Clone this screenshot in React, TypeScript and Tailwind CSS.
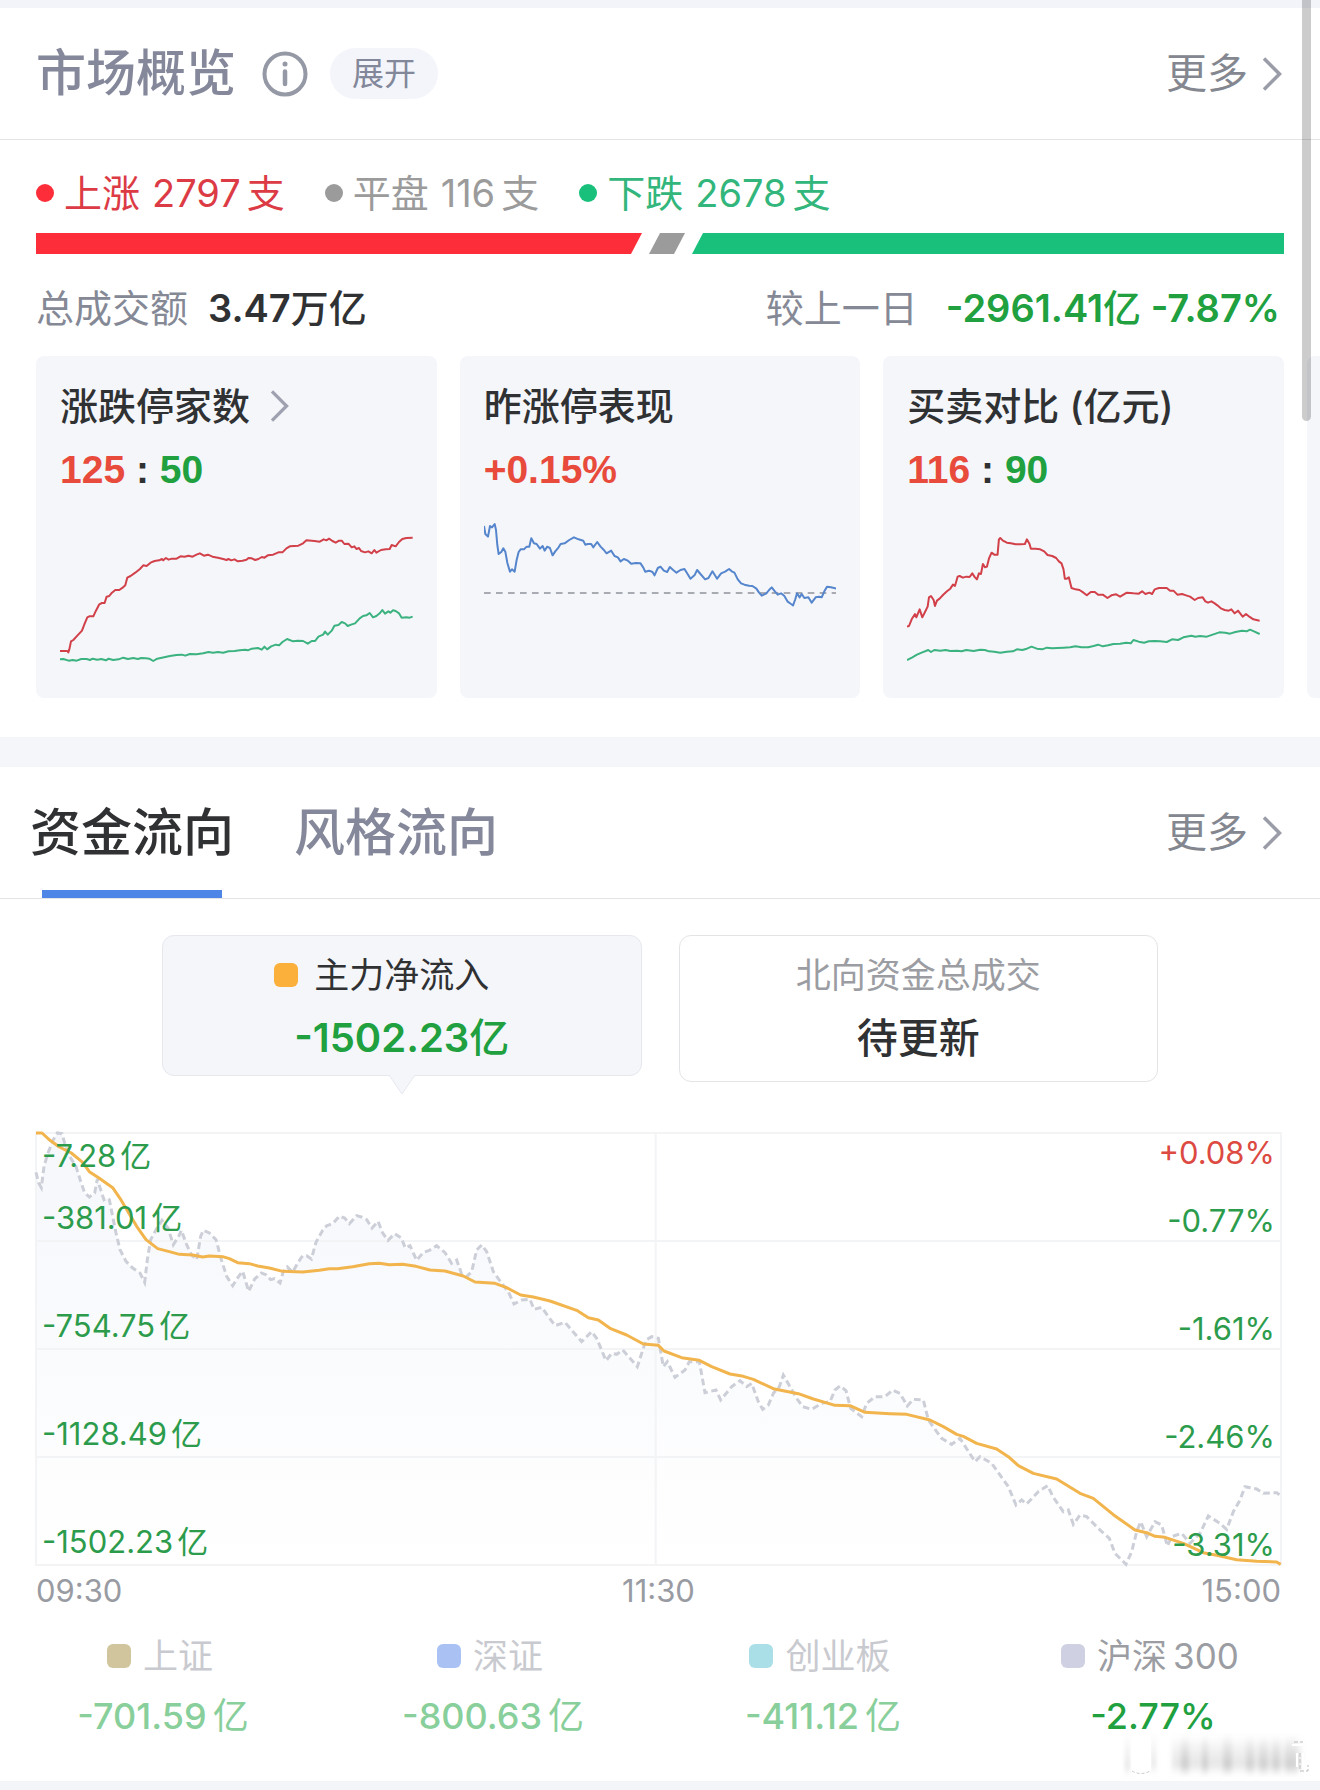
import clsx from 'clsx'
import React, { useState } from 'react'

const upDownRed =
    '0,393 22,393 25,397 28,388 33,364 40,360 52,347 66,332 74,311 82,292 88,289 100,289 108,272 118,253 126,249 134,249 140,230 148,228 156,218 166,210 178,210 188,203 196,196 202,173 212,168 226,158 240,147 250,136 260,138 272,128 284,123 298,121 306,117 310,121 318,114 326,119 336,116 350,116 362,109 374,110 386,107 398,110 410,104 420,100 432,107 444,104 458,110 474,113 490,117 500,120 506,117 514,121 524,118 534,124 548,122 560,119 566,114 576,115 586,120 596,117 606,111 614,113 624,106 640,104 656,97 668,97 680,85 690,79 716,77 730,70 740,61 764,63 780,65 792,58 800,61 808,56 818,63 828,68 838,62 846,62 854,72 866,71 876,82 884,79 890,87 898,84 904,93 916,97 926,94 936,100 944,90 950,98 964,90 978,88 990,87 996,75 1008,79 1018,66 1028,57 1040,54 1059,53'
const upDownGreen =
    '0,418 10,417 26,422 38,420 50,422 64,417 80,417 90,420 98,416 112,419 124,417 138,421 146,416 160,420 176,418 190,413 204,417 220,414 234,417 244,414 258,415 268,416 280,423 292,416 306,413 330,408 350,405 366,404 376,407 390,402 410,403 430,400 446,396 460,398 474,396 490,398 506,394 524,393 540,391 556,389 564,391 576,386 594,384 606,389 614,380 622,388 634,379 648,374 658,376 668,366 682,357 700,364 714,362 730,363 744,371 756,363 766,363 776,350 790,344 796,335 804,344 816,332 824,317 836,315 846,306 856,310 864,318 874,314 886,310 900,295 910,288 920,286 930,279 940,292 950,288 960,280 968,270 976,281 986,274 992,278 1000,271 1008,273 1018,280 1026,293 1040,292 1050,293 1059,290'
const yesterdayBlue =
    '0,18 4,42 12,50 18,18 24,22 32,12 36,30 40,75 44,102 52,96 58,85 64,95 70,128 78,155 84,148 92,155 98,120 104,96 110,88 120,88 128,80 136,80 142,55 150,70 158,72 168,86 176,78 182,92 190,80 198,84 206,106 214,94 224,82 230,72 242,70 256,60 270,52 284,58 298,62 304,74 312,72 322,72 328,82 340,66 350,80 360,90 368,100 382,92 392,108 402,112 410,124 420,117 432,122 442,131 456,129 470,130 478,142 484,155 496,152 506,156 512,166 522,144 530,140 540,152 550,156 558,141 568,150 578,158 590,150 602,147 610,160 620,176 632,166 640,150 650,162 664,178 674,174 686,154 700,176 712,160 724,155 736,147 744,154 752,158 762,178 772,190 782,194 796,197 806,198 818,206 826,218 834,227 848,220 856,210 864,202 874,215 882,224 892,220 902,228 912,245 922,252 928,256 934,240 940,220 948,232 954,222 962,234 974,232 984,248 996,232 1006,230 1014,232 1022,214 1030,200 1042,202 1059,206'
const buyRed =
    '0,320 6,318 14,298 24,282 28,292 38,268 46,292 54,276 62,260 66,232 72,228 80,240 84,258 90,242 98,236 108,225 120,214 130,206 138,194 144,198 152,170 158,168 168,173 178,170 188,171 196,160 204,172 210,178 216,160 222,162 228,132 234,142 240,140 246,116 254,98 262,104 272,104 276,58 280,54 288,62 300,68 312,70 326,73 340,73 354,72 360,58 368,72 372,86 386,86 400,88 412,94 422,105 436,108 448,114 456,124 464,130 470,148 474,176 480,176 486,172 494,204 506,208 518,210 530,218 540,226 552,216 564,216 574,224 588,224 602,234 614,226 628,223 640,230 650,224 660,218 680,220 696,221 706,214 716,222 728,218 736,222 744,208 756,204 780,204 790,212 800,212 812,224 826,222 838,226 850,230 864,240 874,234 888,232 896,244 904,248 914,244 924,250 932,256 944,266 954,270 966,272 974,268 984,280 994,272 1008,290 1018,282 1028,290 1040,298 1059,302'
const sellGreen =
    '0,420 16,412 30,404 44,398 64,390 72,396 82,390 100,392 116,390 130,393 150,392 164,394 178,390 200,393 220,389 234,390 246,394 262,395 280,398 300,395 318,394 330,388 346,390 360,386 374,380 390,386 406,388 420,383 436,385 452,384 470,383 490,382 506,379 524,382 544,382 560,378 574,374 588,379 604,376 620,372 640,371 658,368 672,370 680,360 696,365 712,368 726,364 744,363 760,364 780,366 796,358 814,360 830,352 854,347 866,350 880,348 900,350 918,344 938,337 956,338 970,341 986,336 1006,332 1020,334 1030,329 1042,334 1059,342'
const mainFlow =
    '0,0 18,0 42,22 70,42 106,60 140,88 160,116 190,136 230,164 252,196 276,236 302,280 330,320 365,347 400,356 430,364 470,366 500,372 520,369 560,371 580,377 605,389 640,392 665,399 700,405 740,415 800,417 850,412 880,407 905,407 950,401 1000,392 1030,391 1060,395 1100,394 1140,400 1182,411 1227,414 1282,429 1317,447 1377,451 1412,464 1454,486 1492,492 1542,504 1622,532 1657,554 1687,561 1724,587 1772,606 1822,633 1867,637 1884,654 1937,674 1990,682 2027,701 2082,723 2122,730 2152,739 2212,767 2287,782 2332,798 2397,817 2442,818 2487,838 2562,842 2612,844 2682,861 2722,881 2762,904 2782,910 2822,931 2882,948 2917,971 2947,998 2992,1021 3062,1038 3132,1081 3172,1096 3232,1145 3297,1191 3332,1199 3357,1210 3387,1213 3442,1231 3502,1259 3542,1267 3602,1280 3662,1285 3722,1287 3734,1294'
const csi300 =
    '0,118 8,150 16,164 24,100 36,60 52,20 64,0 78,2 90,45 104,75 120,100 134,145 146,180 160,192 176,180 184,138 194,170 204,200 212,195 220,200 232,260 240,300 252,350 270,385 290,405 312,420 326,448 334,380 344,320 360,290 378,262 396,285 412,335 428,310 436,292 452,335 466,365 482,380 494,310 502,292 520,300 540,320 556,380 572,430 590,458 608,430 620,415 638,475 656,438 676,420 690,425 704,440 716,437 732,450 742,415 754,402 770,418 786,388 800,368 812,368 826,378 840,328 860,292 872,278 890,272 910,250 926,255 940,272 962,248 976,252 992,260 1008,285 1026,265 1040,300 1056,322 1076,302 1096,315 1108,345 1122,338 1142,382 1162,358 1180,352 1202,338 1227,359 1247,391 1262,381 1277,423 1292,431 1307,416 1322,351 1337,336 1352,356 1372,416 1397,451 1417,476 1434,513 1457,501 1482,499 1494,529 1517,523 1557,578 1587,568 1637,626 1667,596 1682,616 1710,683 1727,661 1742,664 1760,651 1804,701 1830,621 1847,611 1867,616 1882,701 1894,686 1917,733 1947,711 1960,686 1990,686 2007,779 2040,771 2054,801 2087,761 2112,743 2132,761 2147,751 2167,806 2180,829 2197,816 2212,781 2230,761 2242,726 2262,761 2282,796 2300,821 2327,829 2357,811 2382,806 2397,771 2412,759 2430,773 2444,826 2477,851 2492,811 2517,791 2547,791 2570,771 2592,781 2614,819 2632,799 2662,801 2677,861 2702,896 2717,916 2747,934 2772,916 2817,986 2832,971 2867,991 2917,1061 2940,1116 2957,1101 2972,1113 3007,1076 3035,1058 3052,1093 3082,1136 3097,1131 3112,1174 3132,1146 3152,1151 3192,1191 3220,1216 3237,1261 3270,1294 3287,1256 3302,1196 3314,1166 3332,1211 3357,1166 3377,1176 3394,1239 3407,1211 3437,1201 3462,1231 3492,1201 3517,1149 3552,1171 3572,1189 3592,1136 3612,1101 3627,1061 3662,1068 3682,1081 3722,1079 3735,1089'

const RED = '#d2404a'
const GREEN = '#3bb27f'
const BLUE = '#5585cc'

const leftLabels = ['-381.01', '-754.75', '-1128.49', '-1502.23']
const rightLabels = ['-0.77%', '-1.61%', '-2.46%', '-3.31%']

const legends = [
    { name: '上证', value: '-701.59', unit: '亿', swatch: 'bg-[#d0c59c]', active: false },
    { name: '深证', value: '-800.63', unit: '亿', swatch: 'bg-[#a9c1f3]', active: false },
    { name: '创业板', value: '-411.12', unit: '亿', swatch: 'bg-[#aadfe8]', active: false },
    { name: '沪深', suffix: '300', value: '-2.77%', swatch: 'bg-[#cfd0e1]', active: true },
]

// card figures keep one width per digit
const figure = "font-['Liberation_Sans','Noto_Sans_CJK_SC',sans-serif] text-[39px] font-bold"

const Chevron = ({ className }: { className?: string }) => (
    <svg viewBox="0 0 20 34" fill="none" stroke="currentColor" strokeWidth={3.5} className={className}>
        <path d="M2 1.5 17.5 17 2 32.5" />
    </svg>
)

const More = () => (
    <a href="#more" className="flex items-center gap-3.5 text-[41px] leading-[75px] text-[#84878f]">
        更多
        <Chevron className="h-[34px] w-5 text-[#9a9ca8]" />
    </a>
)

const Count = ({ label, count, dot, text }: { label: string; count: number; dot: string; text: string }) => (
    <div className={clsx('flex items-center', text)}>
        <span className={clsx('mr-2.5 size-[18px] rounded-full', dot)}></span>
        <span>{label}</span>
        <span className="mr-1.5 ml-3">{count}</span>
        <span>支</span>
    </div>
)

const Spark = ({ lines, dashed }: { lines: { points: string; color: string }[]; dashed?: boolean }) => (
    <svg viewBox="0 0 1059 450" preserveAspectRatio="none" className="mt-[26px] block h-[150px] w-full" fill="none">
        {dashed && <path d="M0 219H1059" stroke="#8f939b" strokeWidth={5} strokeDasharray="20 16" />}
        {lines.map((line) => (
            <polyline
                key={line.color}
                points={line.points}
                stroke={line.color}
                strokeWidth={6}
                strokeLinejoin="round"
            />
        ))}
    </svg>
)

const Card = ({ children }: { children?: React.ReactNode }) => (
    <div className="w-[calc((100%-46px)/3)] flex-none rounded-lg bg-[#f4f6fa] px-6 pt-[26px] pb-7 text-[38px] leading-[48px]">
        {children}
    </div>
)

const Versus = ({ up, down }: { up: number; down: number }) => (
    <p className={clsx('mt-4', figure)}>
        <span className="text-[#e84b3c]">{up}</span> : <span className="text-[#20a03f]">{down}</span>
    </p>
)

const MarketOverview = () => (
    <section className="overflow-hidden pb-[39px]">
        <header className="flex items-center justify-between border-b border-[#e3e4e6] py-7 pr-[38px] pl-9">
            <div className="flex items-center">
                <h2 className="text-[50px] leading-[75px] font-medium text-[#84889a]">市场概览</h2>
                <svg viewBox="0 0 46 46" fill="none" className="ml-[26px] size-[46px] text-[#9598a5]">
                    <circle cx="23" cy="23" r="20.5" stroke="currentColor" strokeWidth="4" />
                    <circle cx="23" cy="13" r="2.5" fill="currentColor" />
                    <path d="M23 20.5V33" stroke="currentColor" strokeWidth="4.5" strokeLinecap="round" />
                </svg>
                <button
                    type="button"
                    className="ml-[22px] rounded-full bg-[#f4f5fa] px-[22px] text-[32px] leading-[51px] text-[#82879a]"
                >
                    展开
                </button>
            </div>
            <More />
        </header>

        <div className="px-9">
            <div className="flex gap-10 pt-[29px] text-[38px] leading-[48px]">
                <Count label="上涨" count={2797} dot="bg-[#fd2e3a]" text="text-[#dc3b45]" />
                <Count label="平盘" count={116} dot="bg-[#9b9b9b]" text="text-[#9b9b9b]" />
                <Count label="下跌" count={2678} dot="bg-[#18c07c]" text="text-[#32b67b]" />
            </div>
            <div className="mt-4 flex h-[21px] gap-[7px]">
                <span className="flex-[606] bg-[#fd2e3a] [clip-path:polygon(0_0,100%_0,calc(100%-11px)_100%,0_100%)]"></span>
                <span className="w-9 bg-[#9b9b9b] [clip-path:polygon(11px_0,100%_0,calc(100%-11px)_100%,0_100%)]"></span>
                <span className="flex-[592] bg-[#18c07c] [clip-path:polygon(11px_0,100%_0,100%_100%,0_100%)]"></span>
            </div>
            <div className="mt-[30px] flex justify-between pr-1 text-[38px] leading-[48px]">
                <p className="flex gap-5">
                    <span className="text-[#858996]">总成交额</span>
                    <span className="font-semibold text-[#303133]">
                        3.47<span className="font-medium">万亿</span>
                    </span>
                </p>
                <p className="flex gap-7">
                    <span className="text-[#858996]">较上一日</span>
                    <span className="font-semibold text-[#20a03f]">
                        -2961.41<span className="font-medium">亿</span> -7.87%
                    </span>
                </p>
            </div>

            <div className="mt-6 flex gap-[23px] text-[#303133]">
                <Card>
                    <h3 className="flex items-center gap-5 font-medium">
                        涨跌停家数
                        <Chevron className="h-8 w-[19px] text-[#9fa1b0]" />
                    </h3>
                    <Versus up={125} down={50} />
                    <Spark
                        lines={[
                            { points: upDownRed, color: RED },
                            { points: upDownGreen, color: GREEN },
                        ]}
                    />
                </Card>
                <Card>
                    <h3 className="font-medium">昨涨停表现</h3>
                    <p className={clsx('mt-4 text-[#e84b3c]', figure)}>+0.15%</p>
                    <Spark dashed lines={[{ points: yesterdayBlue, color: BLUE }]} />
                </Card>
                <Card>
                    <h3 className="font-medium">买卖对比 (亿元)</h3>
                    <Versus up={116} down={90} />
                    <Spark
                        lines={[
                            { points: buyRed, color: RED },
                            { points: sellGreen, color: GREEN },
                        ]}
                    />
                </Card>
                <Card />
            </div>
        </div>
    </section>
)

const FlowChart = () => (
    <div className="relative mt-[51px] text-[31px] text-[#2c9c4c]">
        <svg
            viewBox="0 0 3735 1296"
            preserveAspectRatio="none"
            fill="none"
            className="block h-[432px] w-full overflow-visible"
        >
            <defs>
                <linearGradient id="area" x1="0" y1="0" x2="0" y2="1">
                    <stop offset="0" stopColor="#f5f7fb" />
                    <stop offset="1" stopColor="#ffffff" />
                </linearGradient>
            </defs>
            <polygon points={`0,1296 ${csi300} 3735,1296`} fill="url(#area)" />
            <path
                d="M0 0H3735V1296H0ZM0 324H3735M0 648H3735M0 972H3735M1859 0V1296"
                stroke="#f3f4f6"
                strokeWidth={6}
            />
            <polyline points={csi300} stroke="#cdcfd8" strokeWidth={9} strokeDasharray="20 11" />
            <polyline points={mainFlow} stroke="#f2b44c" strokeWidth={9} strokeLinejoin="round" />
        </svg>
        {/* axis values lie over the plot, one grid row each */}
        <div className="absolute inset-0 grid grid-rows-4 px-1.5">
            {leftLabels.map((label, i) => (
                <div key={label} className="flex items-stretch justify-between">
                    <div className="flex flex-col justify-end leading-[46px]">
                        {i === 0 && (
                            <span className="mb-auto">
                                -7.28<span className="ml-1">亿</span>
                            </span>
                        )}
                        <span>
                            {label}
                            <span className="ml-1">亿</span>
                        </span>
                    </div>
                    <div className="flex flex-col items-end justify-end leading-10">
                        {i === 0 && <span className="mb-auto text-[#dc4a42]">+0.08%</span>}
                        <span>{rightLabels[i]}</span>
                    </div>
                </div>
            ))}
        </div>
    </div>
)

const CapitalFlow = () => {
    const [tab, setTab] = useState('资金流向')

    return (
        <section>
            <header className="flex items-center justify-between border-b border-[#e3e4e6] pr-[38px] pl-[30px]">
                <div className="flex gap-[60px]">
                    {['资金流向', '风格流向'].map((name) => (
                        <button
                            key={name}
                            type="button"
                            onClick={() => setTab(name)}
                            className={clsx(
                                'relative py-7 text-[51px] leading-[75px] font-medium',
                                tab === name ? 'text-[#303133]' : 'text-[#84889a]'
                            )}
                        >
                            {name}
                            {tab === name && <span className="absolute inset-x-3 bottom-0 h-2 bg-[#4e86e8]"></span>}
                        </button>
                    ))}
                </div>
                <More />
            </header>

            <div className="flex items-start gap-[37px] px-[162px] pt-9">
                <button
                    type="button"
                    className="relative flex-1 rounded-xl border border-[#e6e8ee] bg-[#f4f6fa] pt-[15px] pb-[9px]"
                >
                    <span className="flex items-center justify-center gap-4 pr-10 text-[35px] leading-[48px] text-[#303133]">
                        <span className="size-6 rounded-md bg-[#fbb03b]"></span>
                        主力净流入
                    </span>
                    <span className="mt-[11px] block text-[40px] leading-[56px] font-semibold text-[#20a03f]">
                        -1502.23<span className="font-medium">亿</span>
                    </span>
                    <svg viewBox="0 0 26 20" className="absolute top-full left-1/2 h-5 w-[26px] -translate-x-1/2">
                        <path d="M0 0 13 19 26 0" fill="#f4f6fa" stroke="#e6e8ee" />
                    </svg>
                </button>
                <button type="button" className="flex-1 rounded-xl border border-[#e3e4e6] pt-[15px] pb-[15px]">
                    <span className="block text-[35px] leading-[48px] text-[#9b9da3]">北向资金总成交</span>
                    <span className="mt-[11px] block text-[41px] leading-[56px] font-medium text-[#303133]">
                        待更新
                    </span>
                </button>
            </div>

            <div className="pr-[39px] pl-9">
                <FlowChart />
                <div className="mt-1.5 grid grid-cols-3 text-[31px] leading-10 text-[#999ba3]">
                    <span>09:30</span>
                    <span className="text-center">11:30</span>
                    <span className="text-right">15:00</span>
                </div>
            </div>

            <div className="mt-[21px] grid grid-cols-4 pb-[41px] text-center leading-[48px]">
                {legends.map((item) => (
                    <div key={item.name}>
                        <p
                            className={clsx(
                                'flex items-center justify-center pr-2.5 text-[35px]',
                                item.active ? 'text-[#9b9da3]' : 'text-[#c9cacf]'
                            )}
                        >
                            <span className={clsx('mr-3 size-6 rounded-md', item.swatch)}></span>
                            {item.name}
                            {item.suffix && <span className="ml-1.5">{item.suffix}</span>}
                        </p>
                        <p
                            className={clsx(
                                'mt-3 pr-1 text-[36px] font-medium',
                                item.active ? 'text-[#20a03f]' : 'text-[#88cf9b]'
                            )}
                        >
                            {item.value}
                            {item.unit && <span className="ml-1.5 font-normal">{item.unit}</span>}
                        </p>
                    </div>
                ))}
            </div>
        </section>
    )
}

// faded stamp in the bottom corner
const Stamp = () => (
    <svg viewBox="0 0 190 44" className="absolute right-2 bottom-1 h-11 w-[190px]" fill="none">
        <defs>
            <filter id="smear" x="-10%" y="-20%" width="120%" height="140%">
                <feGaussianBlur stdDeviation="2 4" />
            </filter>
            <linearGradient id="fade" x1="0" y1="0" x2="0" y2="44" gradientUnits="userSpaceOnUse">
                <stop offset="0" stopColor="#8c8c8c" stopOpacity="0" />
                <stop offset="1" stopColor="#8c8c8c" />
            </linearGradient>
        </defs>
        <g filter="url(#smear)" fill="url(#fade)">
            <path d="M3 4h5v34H3zM29 2h5v34h-5z" opacity=".3" />
            <path d="M59 4h8v34h-8zM80 4h6v34h-6zM101 2h9v36h-9z" opacity=".4" />
            <path d="M124 4h8v34h-8zM137 6h9v32h-9zM150 4h8v34h-8zM163 4h12v34h-12z" opacity=".35" />
            <path d="M50 8h130v28H50z" opacity=".3" />
        </g>
        <path d="M9 4h20v34q-10 6-20 0z" fill="#fff" />
        <path d="M10 38q9 5 18 0" stroke="#ccc" strokeDasharray="3 2" />
        <path d="M170 12h11M175 20v14M181 20v14l4 4" stroke="#fff" strokeWidth={2} />
        <path d="M172 9h9M178 20v18h8v-6" stroke="#bbb" strokeDasharray="4 2" />
    </svg>
)

const App = () => {
    return (
        <main className="relative border-t-8 border-b-9 border-t-[#f3f4fa] border-b-[#f4f5f9] bg-white font-['Inter','Noto_Sans_CJK_SC',sans-serif]">
            <MarketOverview />
            <div className="h-[30px] bg-[#f4f6fa]"></div>
            <CapitalFlow />
            <Stamp />
            <div className="absolute -top-2 right-[9px] h-[421px] w-[9px] rounded-b-full bg-black/20"></div>
        </main>
    )
}

export default App
